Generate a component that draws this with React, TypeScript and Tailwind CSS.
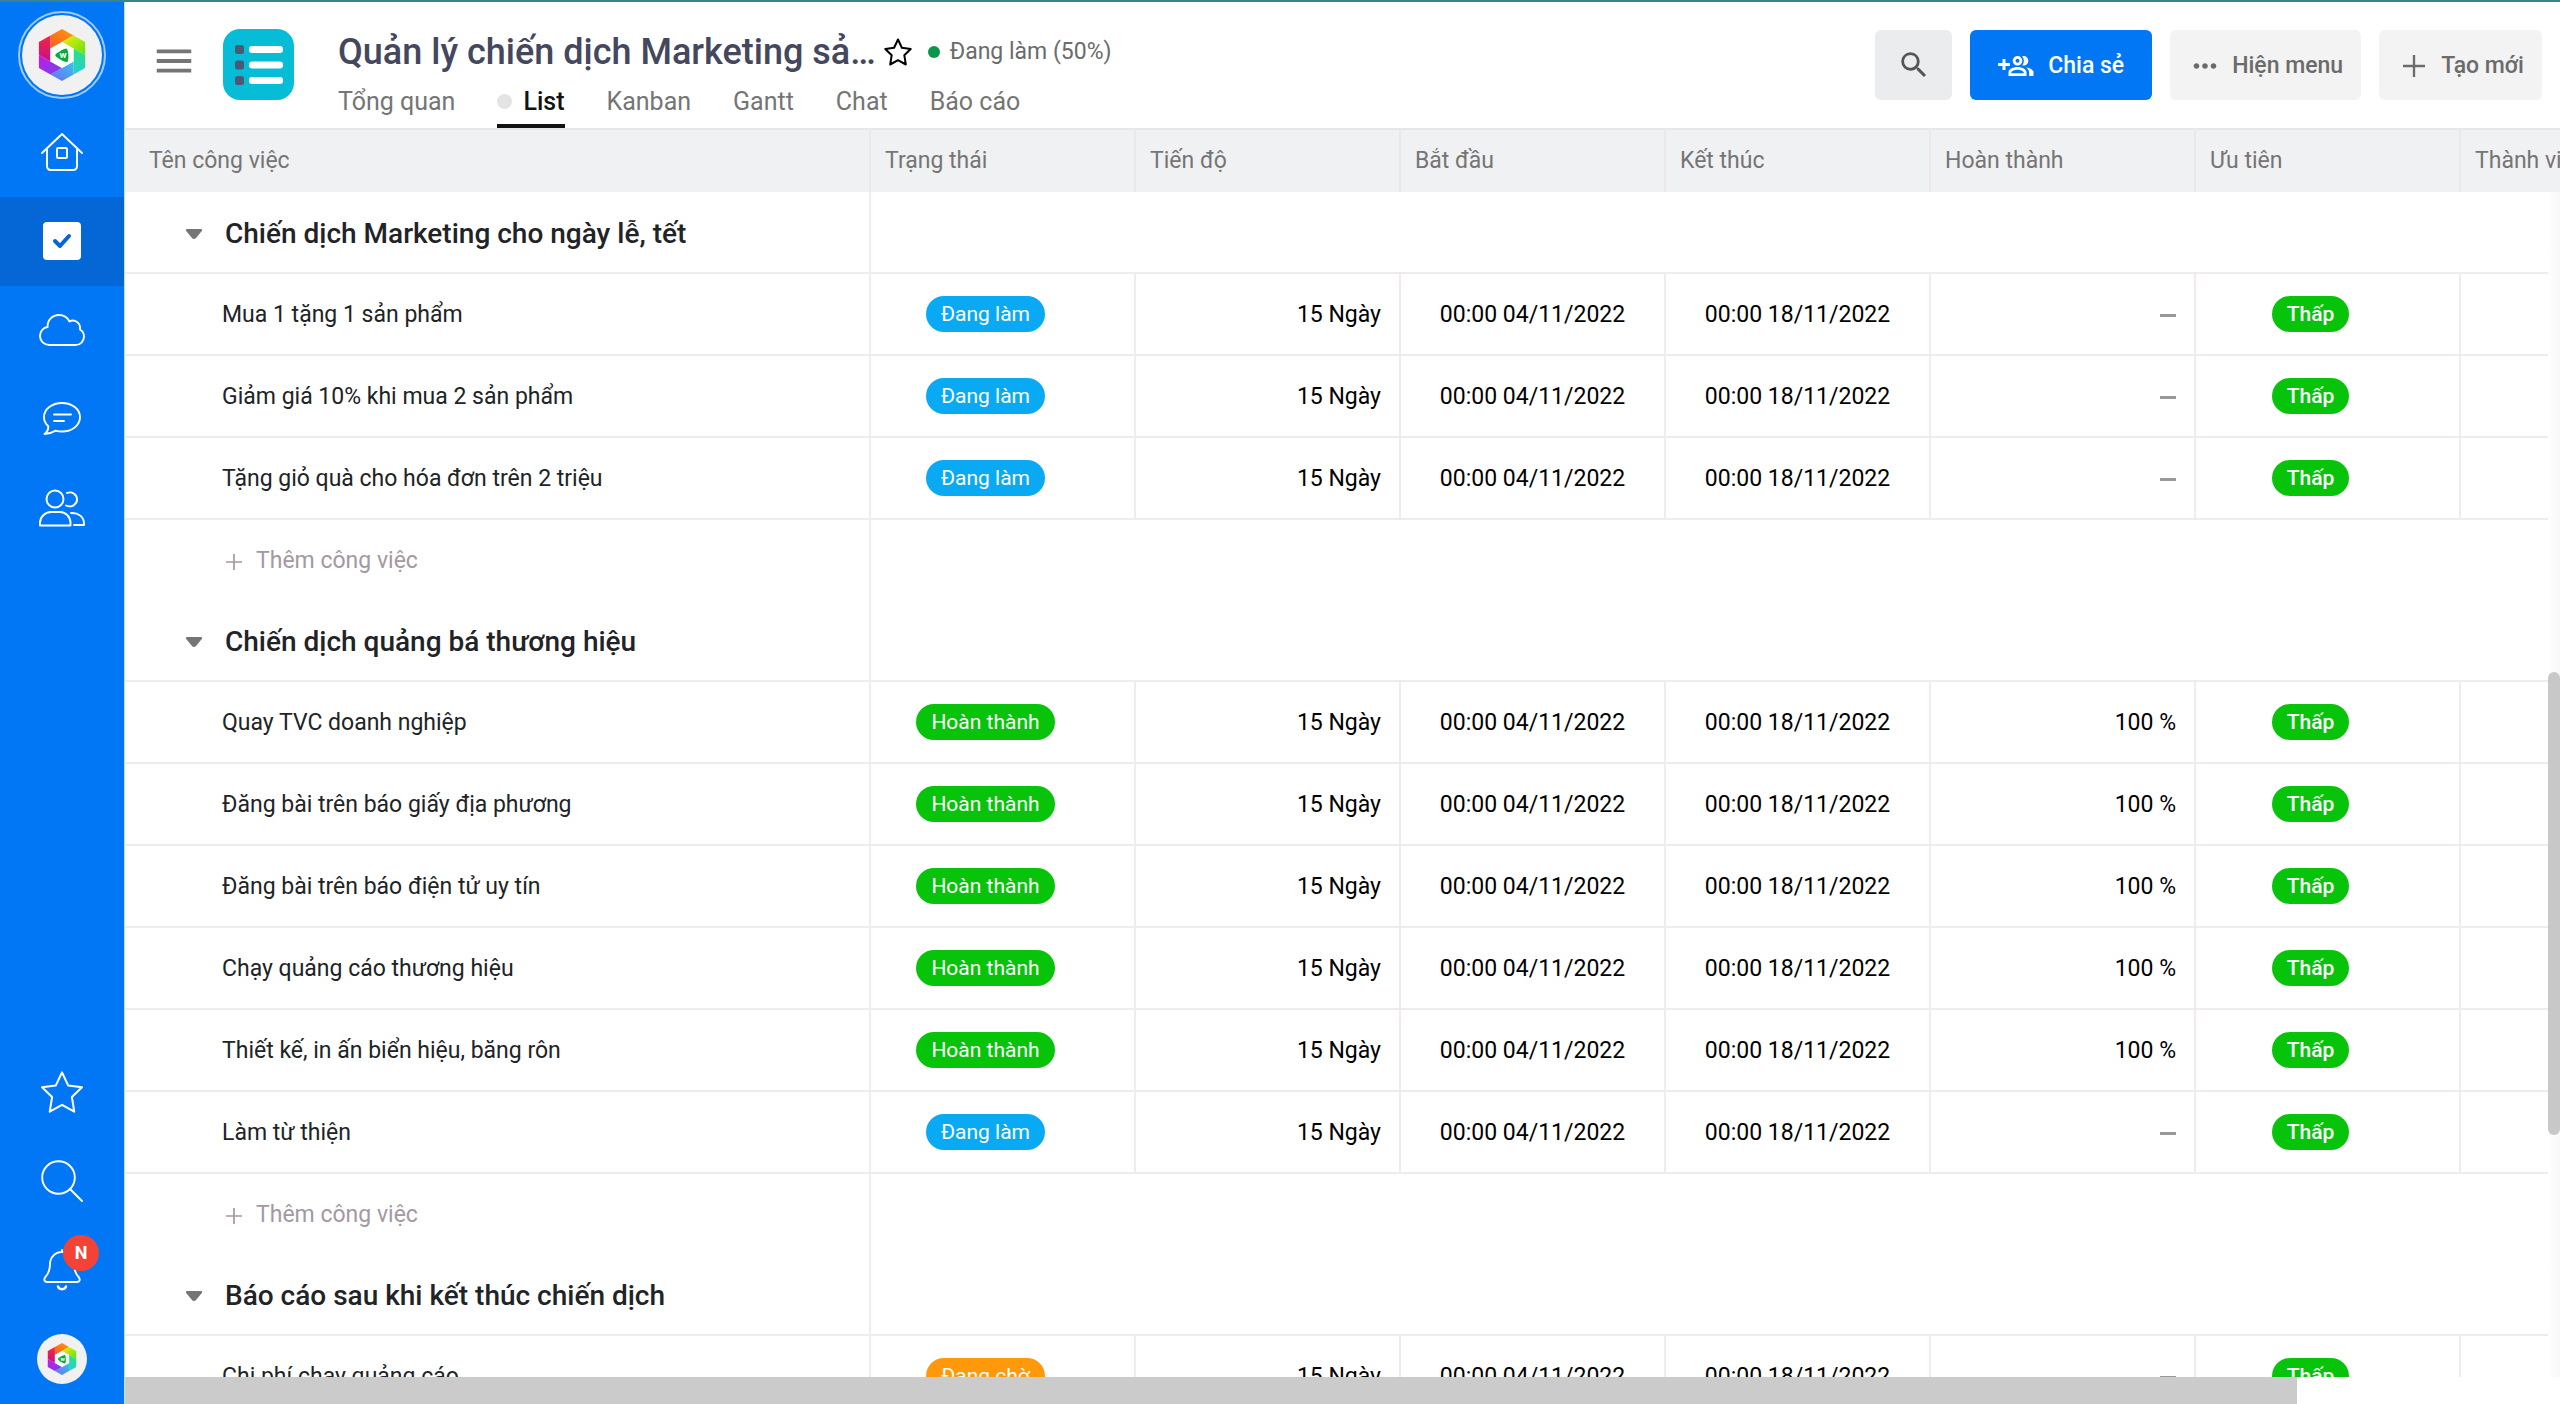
import type { ReactNode } from "react";
import clsx from "clsx";
import { MdMenu, MdMoreHoriz, MdSearch } from "react-icons/md";

type Status = "doing" | "done" | "waiting";

interface Task {
  name: string;
  status: Status;
  done?: string;
}

interface Group {
  title: string;
  tasks: Task[];
}

const STATUS: Record<Status, { label: string; className: string }> = {
  doing: { label: "Đang làm", className: "bg-[#0aa9f4]" },
  done: { label: "Hoàn thành", className: "bg-[#07c40a]" },
  waiting: { label: "Đang chờ", className: "bg-[#ff980b]" },
};

const COLUMNS = ["Trạng thái", "Tiến độ", "Bắt đầu", "Kết thúc", "Hoàn thành", "Ưu tiên", "Thành viên"];

const TABS = ["Tổng quan", "List", "Kanban", "Gantt", "Chat", "Báo cáo"];

const GROUPS: Group[] = [
  {
    title: "Chiến dịch Marketing cho ngày lễ, tết",
    tasks: [
      { name: "Mua 1 tặng 1 sản phẩm", status: "doing" },
      { name: "Giảm giá 10% khi mua 2 sản phẩm", status: "doing" },
      { name: "Tặng giỏ quà cho hóa đơn trên 2 triệu", status: "doing" },
    ],
  },
  {
    title: "Chiến dịch quảng bá thương hiệu",
    tasks: [
      { name: "Quay TVC doanh nghiệp", status: "done", done: "100 %" },
      { name: "Đăng bài trên báo giấy địa phương", status: "done", done: "100 %" },
      { name: "Đăng bài trên báo điện tử uy tín", status: "done", done: "100 %" },
      { name: "Chạy quảng cáo thương hiệu", status: "done", done: "100 %" },
      { name: "Thiết kế, in ấn biển hiệu, băng rôn", status: "done", done: "100 %" },
      { name: "Làm từ thiện", status: "doing" },
    ],
  },
  {
    title: "Báo cáo sau khi kết thúc chiến dịch",
    tasks: [{ name: "Chi phí chạy quảng cáo", status: "waiting" }],
  },
];

const CELL = "h-[82px] border-r-2 border-b-2 border-[#f0ebec] pb-0";

export default function App() {
  return (
    <div className="flex h-screen flex-col overflow-hidden border-t-2 border-[#3b8290] bg-white font-['Roboto',sans-serif] text-[#212326]">
      <div className="flex min-h-0 flex-1">
        <Sidebar />
        <main className="flex min-w-0 flex-1 flex-col">
          <Header />
          <TaskTable />
          <div className="h-[27px] shrink-0">
            <div className="h-full w-[89.2%] bg-[#cbcbcb]" />
          </div>
        </main>
      </div>
    </div>
  );
}

function Sidebar() {
  return (
    <nav className="flex w-[125px] shrink-0 flex-col border-r border-[#c4dcf8] bg-[#0277f6] text-white">
      <div className="flex h-[106px] justify-center pt-[9px]">
        <div className="flex size-[88px] items-center justify-center rounded-full border-2 border-[#9fcbff]">
          <div className="flex size-[80px] items-center justify-center rounded-full bg-[#f1f1f1]">
            <Logo className="h-[52px] w-[48px]" />
          </div>
        </div>
      </div>
      <NavItem label="Trang chủ"><HomeIcon /></NavItem>
      <NavItem label="Công việc" active><TaskIcon /></NavItem>
      <NavItem label="Lưu trữ"><CloudIcon /></NavItem>
      <NavItem label="Trò chuyện"><ChatIcon /></NavItem>
      <NavItem label="Nhân sự"><PeopleIcon /></NavItem>
      <div className="mt-auto">
        <NavItem label="Yêu thích"><StarIcon className="size-[44px]" strokeWidth={1.3} /></NavItem>
        <NavItem label="Tìm kiếm"><SearchIcon /></NavItem>
        <NavItem label="Thông báo">
          <span className="relative">
            <BellIcon />
            <span className="absolute -top-[14px] left-5 flex size-9 items-center justify-center rounded-full bg-[#f44336] text-lg font-bold">
              N
            </span>
          </span>
        </NavItem>
        <NavItem label="Tài khoản">
          <span className="flex size-[50px] items-center justify-center rounded-full bg-[#f1f1f1]">
            <Logo className="h-8 w-[30px]" />
          </span>
        </NavItem>
      </div>
    </nav>
  );
}

function NavItem({ label, active, children }: { label: string; active?: boolean; children: ReactNode }) {
  return (
    <button
      type="button"
      aria-label={label}
      className={clsx("flex h-[89px] w-full items-center justify-center pb-[2px]", active && "bg-[#0566d6]")}
    >
      {children}
    </button>
  );
}

function Header() {
  return (
    <header className="flex h-[126px] shrink-0 items-start pr-[18px] pl-[26px]">
      <button type="button" aria-label="Menu" className="mt-9 text-[#757575]">
        <MdMenu className="size-[46px]" />
      </button>
      <ProjectIcon />
      <div className="ml-11 flex h-full min-w-0 flex-1 flex-col">
        <div className="flex h-[74px] items-center pt-[26px]">
          <h1 className="text-[36px] leading-[48px] font-medium whitespace-nowrap text-[#44475e]">
            Quản lý chiến dịch Marketing sả…
          </h1>
          <button type="button" aria-label="Đánh dấu" className="ml-2 text-black">
            <StarIcon className="size-7" strokeWidth={2} />
          </button>
          <span className="ml-4 size-3 rounded-full bg-[#0c9649]" />
          <span className="ml-[10px] text-[23px] text-[#6b6b6b]">Đang làm (50%)</span>
        </div>
        <nav className="flex flex-1 gap-[42px] text-[25px] text-[#757575]">
          {TABS.map((tab) => (
            <a
              key={tab}
              href="#"
              className={clsx(
                "flex items-center gap-[11px] border-b-4 pt-[3px]",
                tab === "List" ? "border-[#121212] font-medium text-[#121212]" : "border-transparent",
              )}
            >
              {tab === "List" && <span className="size-[15px] rounded-full bg-[#e3e3e3]" />}
              {tab}
            </a>
          ))}
        </nav>
      </div>
      <div className="mt-7 flex gap-[18px] text-[23px] font-medium text-[#6b6b6b]">
        <button type="button" aria-label="Tìm" className="flex h-[70px] w-[77px] items-center justify-center rounded-md bg-[#ebecee] text-[#555]">
          <MdSearch className="size-[34px]" />
        </button>
        <button type="button" className="flex h-[70px] items-center gap-[14px] rounded-md bg-[#0277f6] px-7 pt-[2px] text-white">
          <InviteIcon />
          Chia sẻ
        </button>
        <button type="button" className="flex h-[70px] items-center gap-[10px] rounded-md bg-[#f3f3f3] px-[18px] pt-[2px]">
          <MdMoreHoriz className="size-[34px]" />
          Hiện menu
        </button>
        <button type="button" className="flex h-[70px] items-center gap-4 rounded-md bg-[#f3f3f3] pt-[2px] pr-[18px] pl-6">
          <PlusIcon className="size-[22px]" />
          Tạo mới
        </button>
      </div>
    </header>
  );
}

function TaskTable() {
  return (
    <section className="relative min-h-0 flex-1 overflow-hidden">
      <table className="w-[2601px] table-fixed border-separate border-spacing-0 text-[23px]">
        <colgroup>
          <col className="w-[746px]" />
          {COLUMNS.map((column) => (
            <col key={column} className="w-[265px]" />
          ))}
        </colgroup>
        <thead className="bg-[#f0f1f3] text-left text-[#757575]">
          <tr>
            <th className="h-16 border-t-2 border-r-2 border-t-[#e6e7e9] border-r-[#ece8ea] py-0 pl-6 font-normal">Tên công việc</th>
            {COLUMNS.map((column) => (
              <th key={column} className="h-16 border-t-2 border-r-2 border-t-[#e6e7e9] border-r-[#ece8ea] py-0 pl-[14px] font-normal">
                {column}
              </th>
            ))}
          </tr>
        </thead>
        {GROUPS.map((group) => (
          <TaskGroup key={group.title} group={group} />
        ))}
      </table>
      <div className="absolute top-16 right-0 bottom-0 w-3 bg-linear-to-r from-white to-[#f7f7f7]">
        <div className="mt-[480px] h-[463px] w-full rounded-full bg-[#c8c8c8]" />
      </div>
    </section>
  );
}

function TaskGroup({ group }: { group: Group }) {
  return (
    <tbody>
      <tr>
        <th className={clsx(CELL, "pt-[3px] pl-[60px] text-left text-[28px] font-medium")}>
          <button type="button" className="flex items-center gap-[22px]">
            <svg viewBox="0 0 18 12" className="h-3 w-[18px] text-[#757575]" fill="currentColor" aria-hidden>
              <path d="M2 1h14c1 0 1.400 1 .8 1.900L11 10c-1 1.200-3 1.200-4 0L1.200 2.900C.6 2 1 1 2 1z" />
            </svg>
            {group.title}
          </button>
        </th>
        <td colSpan={COLUMNS.length} className="border-b-2 border-[#f0ebec]" />
      </tr>
      {group.tasks.map((task) => (
        <TaskRow key={task.name} task={task} />
      ))}
      <tr>
        <td className="h-20 border-r-2 border-[#f0ebec] pt-[3px] pb-0 pl-[101px]">
          <button type="button" className="flex items-center gap-[14px] text-[#a598a2]">
            <PlusIcon className="size-4" />
            Thêm công việc
          </button>
        </td>
        <td colSpan={COLUMNS.length} />
      </tr>
    </tbody>
  );
}

function TaskRow({ task }: { task: Task }) {
  const status = STATUS[task.status];
  return (
    <tr className="text-black">
      <td className={clsx(CELL, "pt-[3px] pl-[97px] text-[#212326]")}>{task.name}</td>
      <td className={clsx(CELL, "pt-0 pr-[34px]")}>
        <Badge className={status.className}>{status.label}</Badge>
      </td>
      <td className={clsx(CELL, "pt-[3px] pr-[18px] text-right")}>15 Ngày</td>
      <td className={clsx(CELL, "pt-[2px] text-center")}>00:00 04/11/2022</td>
      <td className={clsx(CELL, "pt-[2px] text-center")}>00:00 18/11/2022</td>
      <td className={clsx(CELL, "pt-[3px] pr-[18px] text-right")}>
        {task.done ?? <span className="ml-auto block h-[3px] w-4 bg-[#999]" />}
      </td>
      <td className={clsx(CELL, "pt-0 pr-[34px]")}>
        <Badge className="bg-[#07c40a] font-medium">Thấp</Badge>
      </td>
      <td className={CELL} />
    </tr>
  );
}

function Badge({ className, children }: { className: string; children: ReactNode }) {
  return (
    <span className={clsx("mx-auto block h-9 w-fit rounded-full px-[15px] text-[21px] leading-[37px] text-white", className)}>
      {children}
    </span>
  );
}

function PlusIcon({ className }: { className: string }) {
  return (
    <svg viewBox="0 0 16 16" className={className} fill="none" stroke="currentColor" strokeWidth="1.700" aria-hidden>
      <path d="M8 0v16M0 8h16" />
    </svg>
  );
}

function InviteIcon() {
  return (
    <svg viewBox="0 0 36 22" className="h-[22px] w-9" fill="currentColor" aria-hidden>
      <path d="M4.500 4h3v4H12v3H7.500v4h-3v-4H0V8h4.500z" />
      <path d="M19.500 1a4.800 4.800 0 1 0 0 9.600 4.800 4.800 0 0 0 0-9.600zm0 2.800a2 2 0 1 1 0 4 2 2 0 0 1 0-4z" fillRule="evenodd" />
      <path d="M19.500 12c-3.300 0-9 1.700-9 5.200V21h18v-3.800c0-3.500-5.700-5.200-9-5.200zm-6.200 6.200v-1c.3-.9 3.300-2.400 6.200-2.400s5.900 1.500 6.200 2.400v1z" fillRule="evenodd" />
      <path d="M25.500 1c2.700 0 4.800 2.100 4.800 4.800s-2.100 4.800-4.800 4.800c-.5 0-.9-.1-1.300-.2a7 7 0 0 0 0-9.200c.4-.1.800-.2 1.300-.2z" />
      <path d="M28 12.400c3.500.6 7.500 2.100 7.500 4.800V21h-4.400v-3.800c0-2-1.200-3.600-3.100-4.800z" />
    </svg>
  );
}

function ProjectIcon() {
  return (
    <svg viewBox="0 0 71 71" className="mt-[27px] ml-[26px] size-[71px] shrink-0" aria-hidden>
      <rect width="71" height="71" rx="17" fill="#06bcd7" />
      {[16, 31.5, 47].map((y) => (
        <g key={y}>
          <rect x="12" y={y} width="9" height="9" rx="2.500" fill="#4a5a75" />
          <rect x="26" y={y + 1} width="34" height="7" rx="3" fill="#fff" />
        </g>
      ))}
    </svg>
  );
}

// Six identical blades around the hexagon, each with its own gradient.
const BLADES = [
  { id: "blade-top", d: "M12 6.750L24 0l12 6.750-24 13.500z", from: "#ff9a12", to: "#fb5a1e", dir: [1, 0, 0, 1] },
  { id: "blade-right-top", d: "M36 6.750l12 6.750V27L24 13.500z", from: "#f7ee08", to: "#5fe015", dir: [0, 0, 1, 1] },
  { id: "blade-right", d: "M48 27v13.500l-12 6.750v-27z", from: "#2de07a", to: "#1fd0d8", dir: [0, 0, 0, 1] },
  { id: "blade-bottom", d: "M36 47.250L24 54l-12-6.750 24-13.500z", from: "#39c3ee", to: "#6b6cf5", dir: [1, 0, 0, 1] },
  { id: "blade-left-bottom", d: "M12 47.250L0 40.500V27l24 13.500z", from: "#c51be0", to: "#6f45f2", dir: [0, 0, 1, 1] },
  { id: "blade-left", d: "M0 27V13.500l12-6.750v27z", from: "#f4273f", to: "#c4108f", dir: [0, 0, 0, 1] },
];

function Logo({ className }: { className: string }) {
  return (
    <svg viewBox="0 0 48 54" className={className} aria-hidden>
      <defs>
        {BLADES.map(({ id, from, to, dir }) => (
          <linearGradient key={id} id={id} x1={dir[0]} y1={dir[1]} x2={dir[2]} y2={dir[3]}>
            <stop offset="0" stopColor={from} />
            <stop offset="1" stopColor={to} />
          </linearGradient>
        ))}
      </defs>
      {BLADES.map(({ id, d }) => (
        <path key={id} d={d} fill={`url(#${id})`} />
      ))}
      <path d="M24 13.500l12 6.750v13.500L24 40.500l-12-6.750v-13.500z" fill="#f8fff8" />
      <path d="M17 27c0-1.800 9.500-6.800 11.300-6.800 2.600 0 3.200 13 1 14S17 29.300 17 27z" fill="#0aa93c" />
      <text x="25" y="30.500" fontSize="10" fontWeight="700" textAnchor="middle" fill="#fff">
        w
      </text>
    </svg>
  );
}

function HomeIcon() {
  return (
    <svg viewBox="0 0 42 38" className="h-[38px] w-[42px]" fill="none" stroke="currentColor" strokeWidth="1.900" strokeLinecap="round" strokeLinejoin="round" aria-hidden>
      <path d="M1 20L21 1l20 19" />
      <path d="M6 16v17q0 4 4 4h22q4 0 4-4V16" />
      <rect x="16" y="15" width="10" height="10" rx="1" />
    </svg>
  );
}

function TaskIcon() {
  return (
    <svg viewBox="0 0 38 38" className="size-[38px]" aria-hidden>
      <rect width="38" height="38" rx="4" fill="#fff" />
      <path d="M12 19l5 5 9-10" fill="none" stroke="#0566d6" strokeWidth="4" strokeLinecap="round" strokeLinejoin="round" />
    </svg>
  );
}

function CloudIcon() {
  return (
    <svg viewBox="0 0 46 32" className="h-8 w-[46px]" fill="none" stroke="currentColor" strokeWidth="1.900" strokeLinejoin="round" aria-hidden>
      <path d="M10.500 31C5 31 1 27 1 22c0-4.800 3.300-8.400 7.600-9C8.200 6.200 13.500 1 20 1c4.500 0 8.400 2.500 10.500 6.500C35.500 4.500 42 9 41 15.500c2.500 1.500 4 4 4 7 0 4.800-3.700 8.500-8.500 8.500z" />
    </svg>
  );
}

function ChatIcon() {
  return (
    <svg viewBox="0 0 38 33" className="h-[33px] w-[38px]" fill="none" stroke="currentColor" strokeWidth="1.900" strokeLinecap="round" strokeLinejoin="round" aria-hidden>
      <path d="M19 1c10 0 18 6.200 18 14.300S29 29.500 19 29.500c-2.200 0-4.400-.3-6.300-.9C9 30.800 5 32 1.500 32c3-2.500 4-5 3.800-7.800C2.500 21.800 1 18.700 1 15.300 1 7.200 9 1 19 1z" />
      <path d="M11 12.500h17M11 19h10" />
    </svg>
  );
}

function PeopleIcon() {
  return (
    <svg viewBox="0 0 46 38" className="h-[38px] w-[46px]" fill="none" stroke="currentColor" strokeWidth="1.900" strokeLinecap="round" strokeLinejoin="round" aria-hidden>
      <circle cx="16" cy="10" r="8.500" />
      <path d="M1 36.500V34c0-6 5-11 11-11h9c6 0 10.500 5 10.500 11v2.500z" />
      <path d="M28 4c5-2 10 1.500 10 6.500S32.500 19 27 16.500M32 24c7.500-.5 13 4 13 10.500v1.500H35" />
    </svg>
  );
}

function StarIcon({ className, strokeWidth }: { className: string; strokeWidth: number }) {
  return (
    <svg viewBox="0 0 28 28" className={className} fill="none" stroke="currentColor" strokeWidth={strokeWidth} strokeLinejoin="round" aria-hidden>
      <path d="M14 1.500l3.900 8.300 8.800 1.200-6.400 6.200 1.500 9.300-7.800-4.300-7.800 4.300 1.500-9.300L1.300 11l8.800-1.200z" />
    </svg>
  );
}

function SearchIcon() {
  return (
    <svg viewBox="0 0 42 42" className="size-[42px]" fill="none" stroke="currentColor" strokeWidth="1.900" strokeLinecap="round" aria-hidden>
      <circle cx="17.500" cy="17.500" r="16.300" />
      <path d="M29 29l12 12" />
    </svg>
  );
}

function BellIcon() {
  return (
    <svg viewBox="0 0 38 42" className="h-[42px] w-[38px]" fill="none" stroke="currentColor" strokeWidth="1.900" strokeLinecap="round" strokeLinejoin="round" aria-hidden>
      <path d="M19 1v2M19 3C12 3 7 8.500 7 15c0 7-1.500 10-5 13.500C.5 31 1.500 33 4 33h30c2.500 0 3.500-2 2-4.500C32.500 25 31 22 31 15c0-6.500-5-12-12-12z" />
      <path d="M15 37.500c1 3.500 7 3.500 8 0" strokeWidth="2.500" />
    </svg>
  );
}
